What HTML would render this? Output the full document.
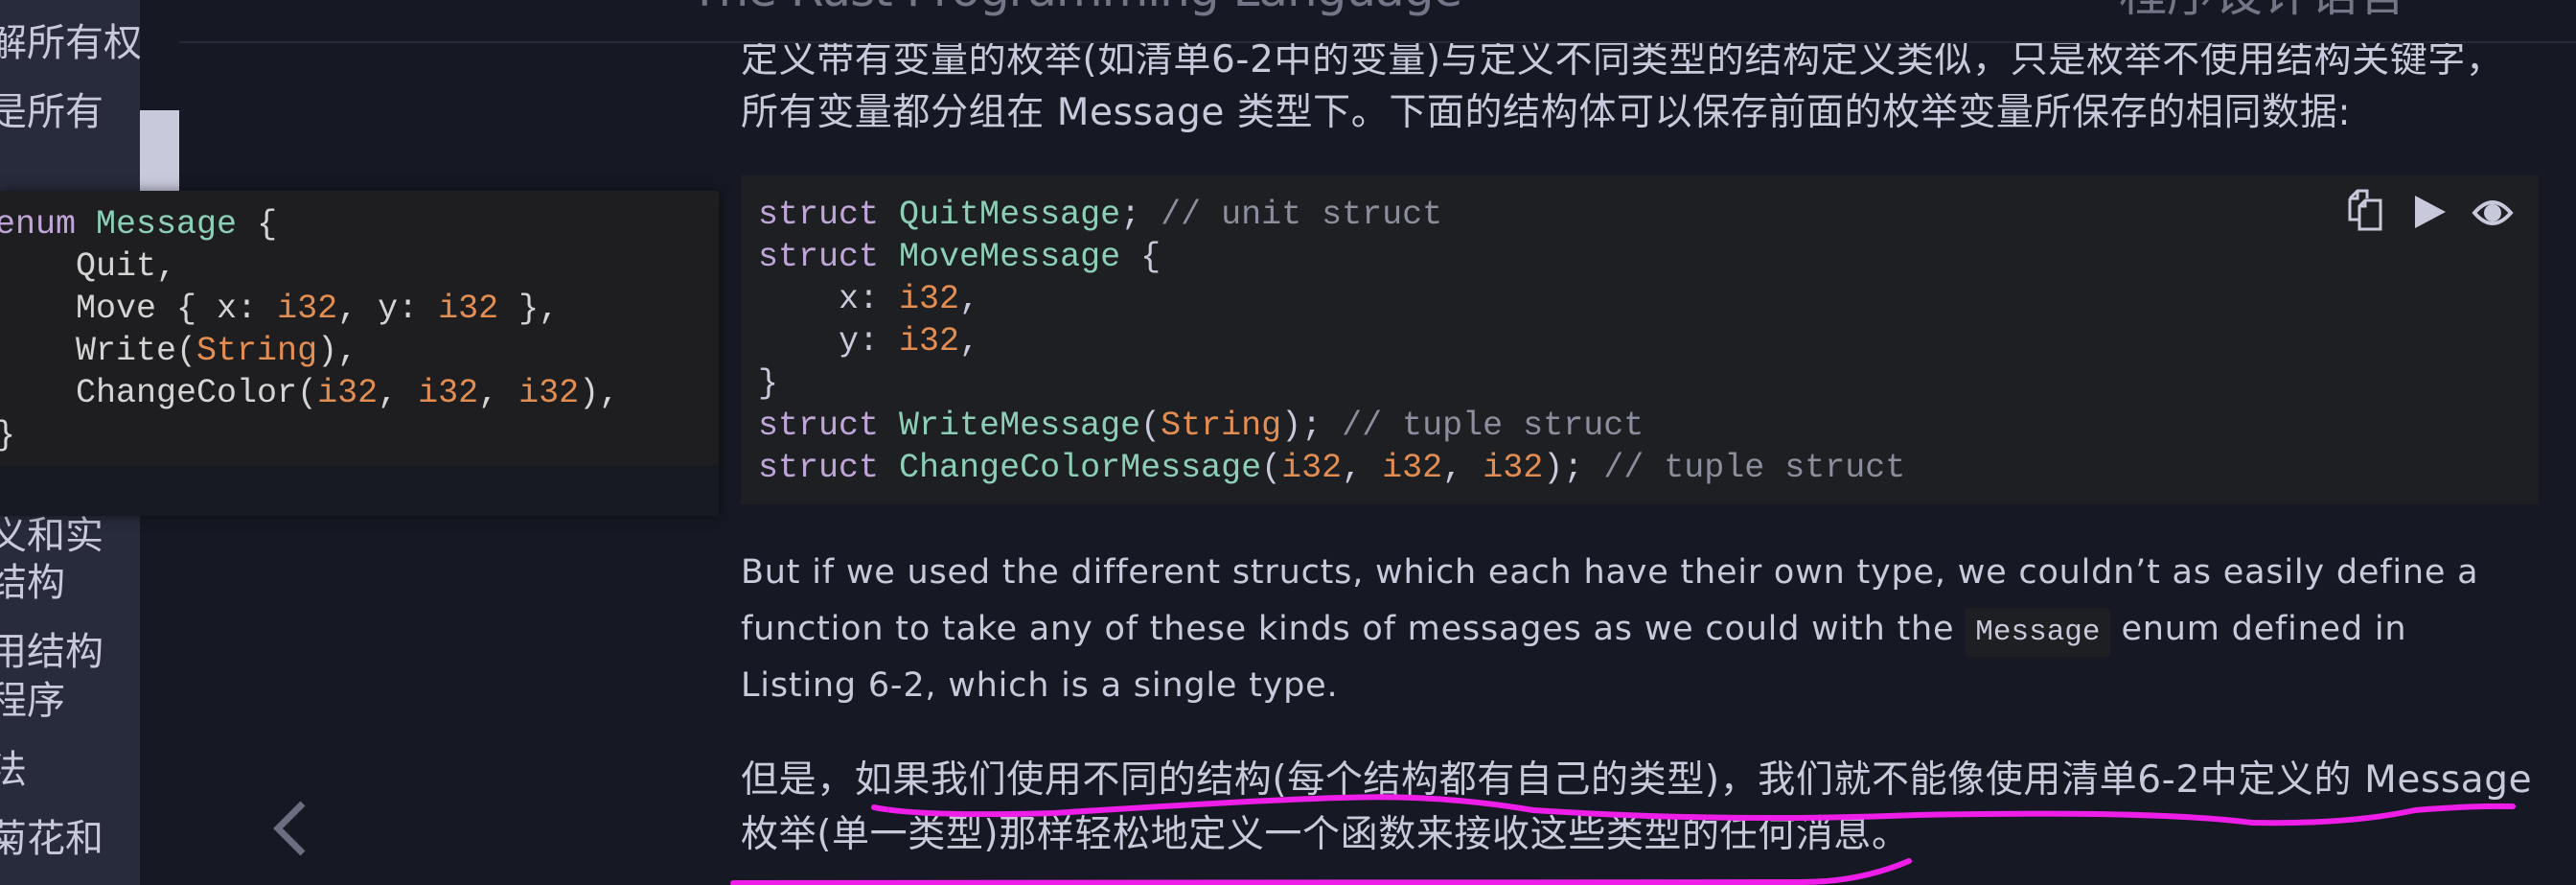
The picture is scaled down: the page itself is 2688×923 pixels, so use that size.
<!DOCTYPE html>
<html><head><meta charset="utf-8">
<style>
*{margin:0;padding:0;box-sizing:border-box}
body{width:2688px;height:923px;overflow:hidden;background:#161923;position:relative;font-family:"Liberation Sans","Noto Sans CJK SC",sans-serif;color:#c8c9db}
.abs{position:absolute;white-space:nowrap}
#side{left:0;top:0;width:146px;height:923px;background:#282b3c;overflow:hidden}
.st{position:absolute;left:-12px;font-size:40px;color:#c8c9db;font-family:"Noto Sans CJK SC",sans-serif;white-space:nowrap}
.cn{font-size:39px;letter-spacing:0.6px;font-family:"DejaVu Sans","Noto Sans CJK SC",sans-serif;line-height:55px}
.en{font-size:35px;line-height:59px;font-family:"DejaVu Sans",sans-serif;letter-spacing:0.8px}
.mono{font-family:"Liberation Mono",monospace;font-size:35px;line-height:44px;white-space:pre}
.k{color:#c0a6d8}.t{color:#8dcfb6}.n{color:#e28d52}.c{color:#8b8e9c}
</style></head><body>
<div id="side" class="abs">
<div class="st" style="top:12px">解所有权</div>
<div class="st" style="top:84px">是所有</div>
<div class="st" style="top:526px">义和实</div>
<div class="st" style="top:575px">结构</div>
<div class="st" style="top:647px">用结构</div>
<div class="st" style="top:698px">程序</div>
<div class="st" style="top:770px">法</div>
<div class="st" style="top:842px">菊花和</div>
</div>
<div class="abs" style="left:146px;top:115px;width:41px;height:84px;background:#c8c9db"></div>

<!-- content -->
<div class="abs cn" style="left:773px;top:35px">定义带有变量的枚举(如清单6-2中的变量)与定义不同类型的结构定义类似，只是枚举不使用结构关键字，</div>
<div class="abs cn" style="left:773px;top:90px">所有变量都分组在 Message 类型下。下面的结构体可以保存前面的枚举变量所保存的相同数据:</div>

<div class="abs" style="left:773px;top:183px;width:1876px;height:343px;background:#1e1f22"></div>
<div class="abs mono" style="left:791px;top:202px"><span class="k">struct</span> <span class="t">QuitMessage</span>; <span class="c">// unit struct</span>
<span class="k">struct</span> <span class="t">MoveMessage</span> {
    x: <span class="n">i32</span>,
    y: <span class="n">i32</span>,
}
<span class="k">struct</span> <span class="t">WriteMessage</span>(<span class="n">String</span>); <span class="c">// tuple struct</span>
<span class="k">struct</span> <span class="t">ChangeColorMessage</span>(<span class="n">i32</span>, <span class="n">i32</span>, <span class="n">i32</span>); <span class="c">// tuple struct</span></div>
<svg class="abs" style="left:2440px;top:195px" width="200" height="50" viewBox="0 0 200 50">
<g fill="none" stroke="#c8c9db" stroke-width="3">
<path d="M12 12 L20 4 H30 V12 M12 12 V34 H22 M12 12 H20 V4"/>
<path d="M22 20 L28 14 H44 V44 H22 Z M22 20 H28 V14"/>
</g>
<path d="M80 9 L112 26 L80 43 Z" fill="#c8c9db"/>
<path d="M142 27 Q161 5 180 27 Q161 49 142 27 Z" fill="none" stroke="#c8c9db" stroke-width="4"/>
<circle cx="161" cy="27" r="9" fill="#c8c9db"/>
</svg>

<div class="abs en" style="left:773px;top:568px">But if we used the different structs, which each have their own type, we couldn’t as easily define a</div>
<div class="abs en" style="left:773px;top:627px">function to take any of these kinds of messages as we could with the <span style="font-family:'Liberation Mono',monospace;font-size:31px;background:#1e1f22;padding:8px 10px;border-radius:4px;letter-spacing:0">Message</span> enum defined in</div>
<div class="abs en" style="left:773px;top:686px">Listing 6-2, which is a single type.</div>

<div class="abs cn" style="left:773px;top:786px">但是，如果我们使用不同的结构(每个结构都有自己的类型)，我们就不能像使用清单6-2中定义的 Message</div>
<div class="abs cn" style="left:773px;top:843px">枚举(单一类型)那样轻松地定义一个函数来接收这些类型的任何消息。</div>

<svg class="abs" style="left:0;top:0" width="2688" height="923">
<g fill="none" stroke="#ee1ee8" stroke-width="6" stroke-linecap="round">
<path d="M912 842 Q960 852 1100 848 Q1300 835 1400 832 Q1500 828 1600 845 Q1800 858 2000 850 Q2250 845 2350 858 Q2450 860 2520 845 Q2580 840 2622 841"/>
<path d="M1992 898 Q1940 920 1880 920 L765 921"/>
</g>
<path d="M316 838 L290 864 L316 890" fill="none" stroke="#6b6e80" stroke-width="7"/>
</svg>

<!-- popup -->
<div class="abs" style="left:0;top:199px;width:750px;height:339px;background:#181a22;box-shadow:0 0 12px rgba(0,0,0,.5)"></div>
<div class="abs" style="left:0;top:199px;width:750px;height:286px;background:#1e1e20"></div>
<div class="abs mono" style="left:-5px;top:212px;color:#d4d4d4"><span class="k">enum</span> <span class="t">Message</span> {
    Quit,
    Move { x: <span class="n">i32</span>, y: <span class="n">i32</span> },
    Write(<span class="n">String</span>),
    ChangeColor(<span class="n">i32</span>, <span class="n">i32</span>, <span class="n">i32</span>),
}</div>

<!-- header -->
<div class="abs" style="left:146px;top:0;width:2542px;height:43px;background:#161923;overflow:hidden">
<div class="abs" style="left:574px;top:-40px;font-size:50px;color:#737687;font-family:'DejaVu Sans',sans-serif;letter-spacing:-1px">The Rust Programming Language</div>
<div class="abs" style="left:2065px;top:-46px;font-size:50px;color:#737687;font-family:'Noto Sans CJK SC',sans-serif">程序设计语言</div>
</div>
<div class="abs" style="left:187px;top:43px;width:2501px;height:2px;background:#262a36"></div>
</body></html>
